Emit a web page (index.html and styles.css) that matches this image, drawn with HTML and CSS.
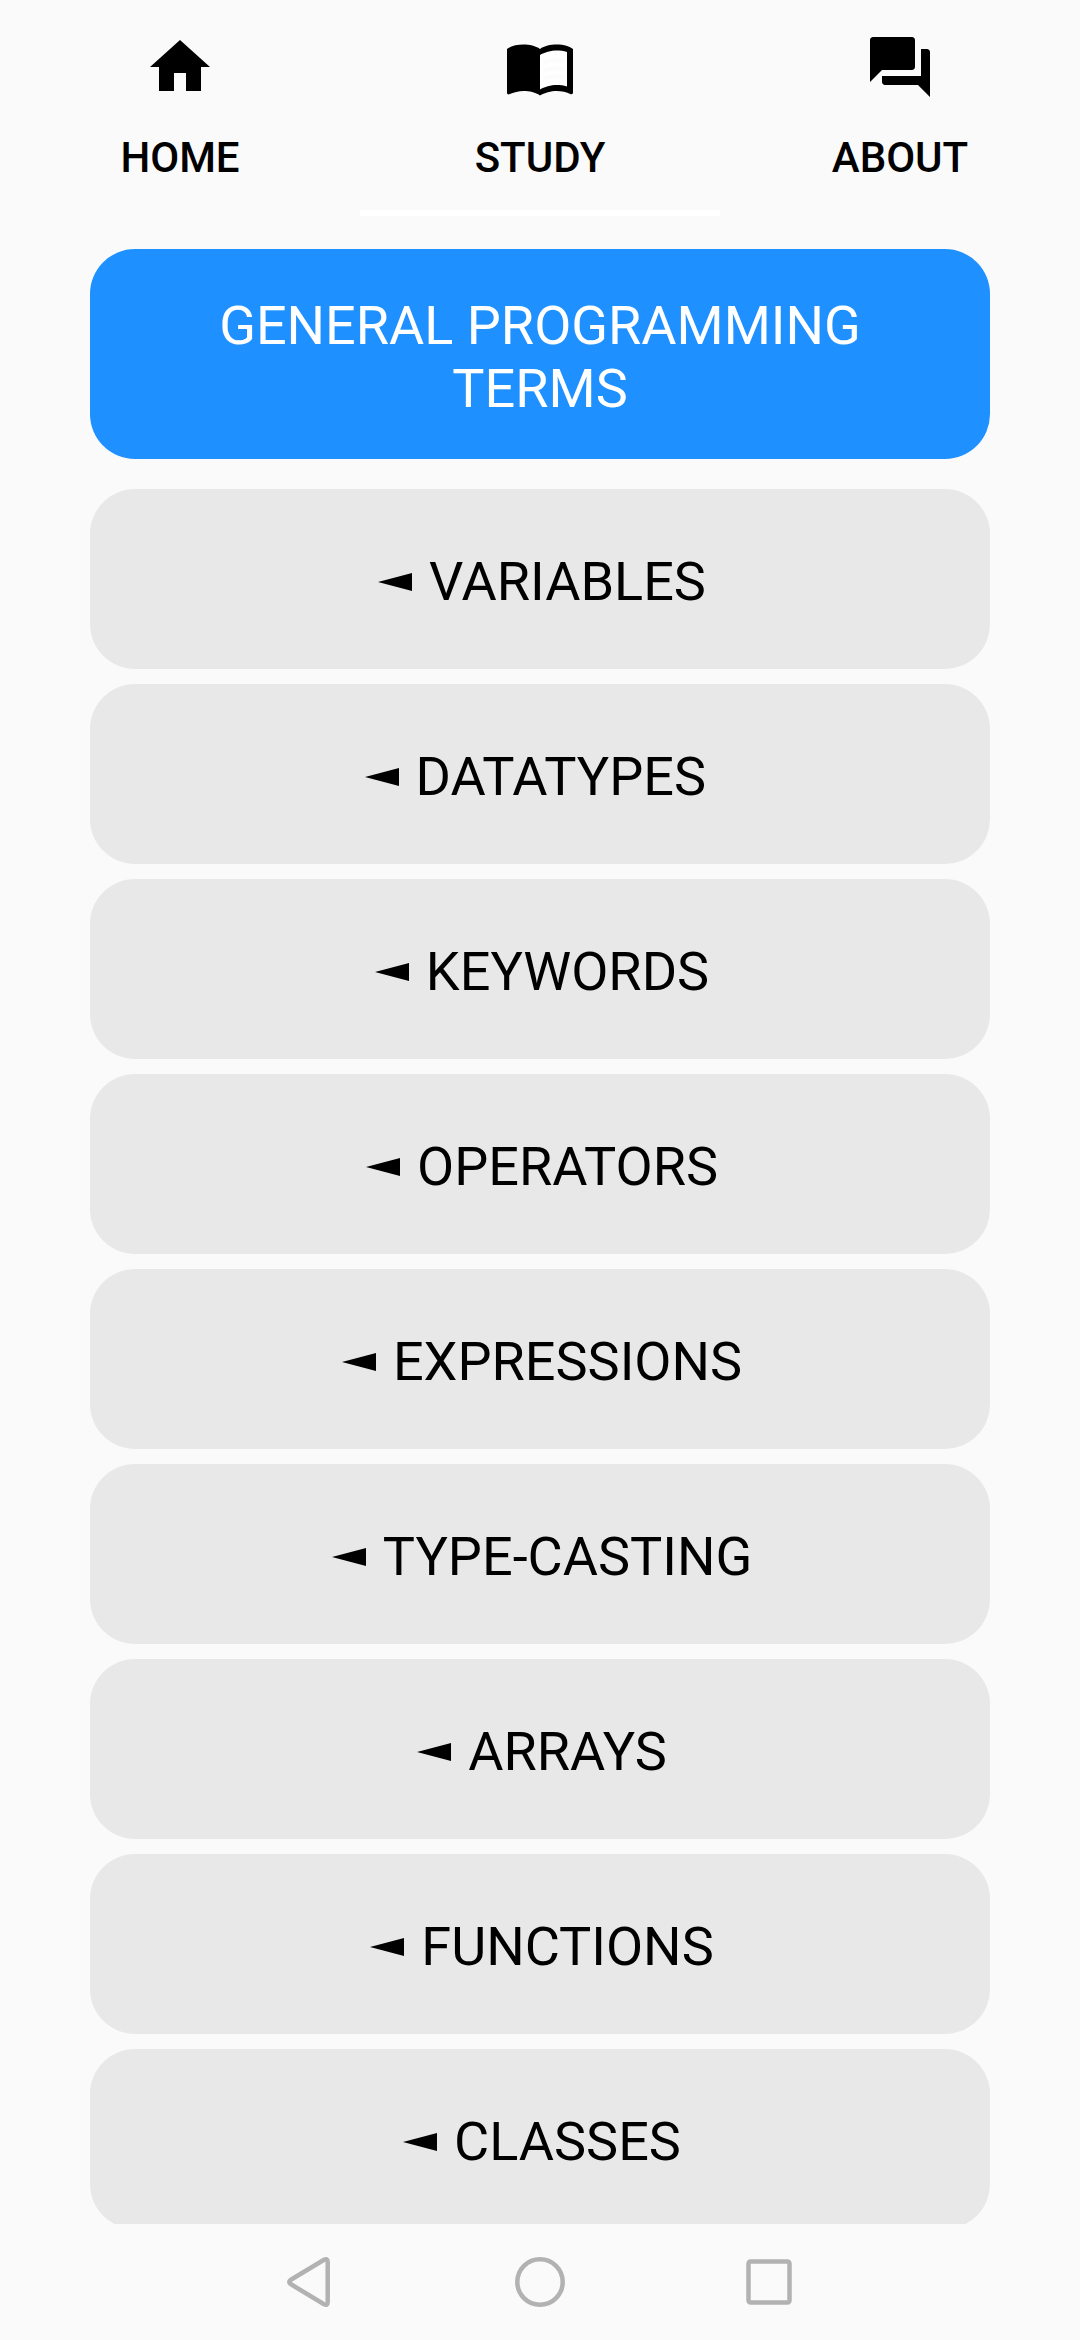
FILE: index.html
```html
<!DOCTYPE html>
<html lang="en">
<head>
<meta charset="utf-8">
<title>Study</title>
<link rel="stylesheet" href="styles.css">
</head>
<body>
<nav class="tabs">
  <a class="tab"><svg class="tab-icon" viewBox="0 0 24 24"><path d="M10 20v-6h4v6h5v-8h3L12 3 2 12h3v8z"/></svg><span class="tab-label">HOME</span></a>
  <a class="tab tab-active"><svg class="tab-icon" viewBox="0 0 24 24"><path class="page" d="M12 8c1.350-.85 3.800-1.500 5.500-1.500 1.200 0 2.400.15 3.500.5v11.500c-1.100-.35-2.300-.5-3.500-.5-1.700 0-4.150.65-5.500 1.500z"/><path class="page-lines" d="M17.500 10.500c.88 0 1.730.09 2.500.26V9.240c-.79-.15-1.640-.24-2.500-.24-1.700 0-3.240.29-4.500.83v1.660c1.130-.64 2.700-.99 4.500-.99zM13 12.490v1.660c1.130-.64 2.700-.99 4.500-.99.88 0 1.730.09 2.500.26V11.900c-.79-.15-1.640-.24-2.500-.24-1.700 0-3.240.3-4.500.83zm4.500 1.840c-1.700 0-3.240.29-4.500.83v1.660c1.130-.64 2.700-.99 4.500-.99.88 0 1.730.09 2.500.26v-1.520c-.79-.16-1.640-.24-2.500-.24z"/><path d="M21 5c-1.110-.35-2.330-.5-3.500-.5-1.950 0-4.050.4-5.500 1.500-1.450-1.100-3.550-1.500-5.500-1.500S2.450 4.900 1 6v14.650c0 .25.25.5.5.5.1 0 .15-.05.25-.05C3.100 20.450 5.050 20 6.500 20c1.950 0 4.050.4 5.500 1.500 1.350-.85 3.800-1.500 5.500-1.500 1.650 0 3.350.3 4.750 1.050.1.05.15.05.25.05.25 0 .5-.25.5-.5V6c-.6-.45-1.250-.75-2-1zm0 13.500c-1.100-.35-2.300-.5-3.500-.5-1.700 0-4.150.65-5.500 1.500V8c1.350-.85 3.800-1.500 5.500-1.500 1.200 0 2.400.15 3.500.5v11.500z"/></svg><span class="tab-label">STUDY</span></a>
  <a class="tab"><svg class="tab-icon" viewBox="0 0 24 24"><path d="M21 6h-2v9H6v2c0 .55.45 1 1 1h11l4 4V7c0-.55-.45-1-1-1zm-4 6V3c0-.55-.45-1-1-1H3c-.55 0-1 .45-1 1v14l4-4h10c.55 0 1-.45 1-1z"/></svg><span class="tab-label">ABOUT</span></a>
</nav>
<main class="content">
  <h1 class="heading">GENERAL PROGRAMMING TERMS</h1>
  <div class="list">
    <div class="item"><svg class="arrow" viewBox="0 0 34 18"><path d="M0 9L34 0v18z"/></svg><span>VARIABLES</span></div>
    <div class="item"><svg class="arrow" viewBox="0 0 34 18"><path d="M0 9L34 0v18z"/></svg><span>DATATYPES </span></div>
    <div class="item"><svg class="arrow" viewBox="0 0 34 18"><path d="M0 9L34 0v18z"/></svg><span>KEYWORDS</span></div>
    <div class="item"><svg class="arrow" viewBox="0 0 34 18"><path d="M0 9L34 0v18z"/></svg><span>OPERATORS</span></div>
    <div class="item"><svg class="arrow" viewBox="0 0 34 18"><path d="M0 9L34 0v18z"/></svg><span>EXPRESSIONS</span></div>
    <div class="item"><svg class="arrow" viewBox="0 0 34 18"><path d="M0 9L34 0v18z"/></svg><span>TYPE-CASTING</span></div>
    <div class="item"><svg class="arrow" viewBox="0 0 34 18"><path d="M0 9L34 0v18z"/></svg><span>ARRAYS</span></div>
    <div class="item"><svg class="arrow" viewBox="0 0 34 18"><path d="M0 9L34 0v18z"/></svg><span>FUNCTIONS</span></div>
    <div class="item"><svg class="arrow" viewBox="0 0 34 18"><path d="M0 9L34 0v18z"/></svg><span>CLASSES</span></div>
  </div>
</main>
<footer class="navbar">
  <svg class="nav-icon" viewBox="0 0 60 60"><path d="M10.500 28L44 7.800Q47.700 6 47.700 10V50Q47.700 54 44 52.200L10.500 32Q8 30 10.500 28z"/></svg>
  <svg class="nav-icon" viewBox="0 0 60 60"><circle cx="30" cy="30" r="22.700"/></svg>
  <svg class="nav-icon" viewBox="0 0 60 60"><rect x="8.500" y="9.500" width="41" height="41" rx="2"/></svg>
</footer>
</body>
</html>
```
FILE: styles.css
```css
* { box-sizing: border-box; }
body {
  margin: 0;
  width: 1080px;
  height: 2340px;
  overflow: hidden;
  display: flex;
  flex-direction: column;
  background: #fafafa;
  color: #000;
  font-family: Roboto, sans-serif;
}
.tabs {
  flex: none;
  display: grid;
  grid-template-columns: repeat(3, 1fr);
  height: 216px;
}
.tab {
  display: flex;
  flex-direction: column;
  align-items: center;
  padding-top: 31px;
  border-bottom: 6px solid transparent;
}
.tab-active { border-bottom-color: #fff; }
.tab-icon { display: block; width: 72px; height: 72px; }
.page { fill: #fff; }
.page-lines { fill: #fcfcfc; }
.tab-label {
  margin-top: 30px;
  font-size: 42px;
  font-weight: 500;
  line-height: 49px;
}
.content {
  flex: 1;
  min-height: 0;
  overflow: hidden;
  padding: 33px 90px 0;
}
.heading {
  margin: 0 0 30px;
  height: 210px;
  padding: 45px 90px 0;
  border-radius: 45px;
  background: #1e90ff;
  color: #fff;
  font-size: 54px;
  font-weight: 400;
  line-height: 63px;
  text-align: center;
}
.list { display: flex; flex-direction: column; gap: 15px; }
.item {
  flex: none;
  display: flex;
  align-items: center;
  justify-content: center;
  gap: 17px;
  height: 180px;
  padding: 5px 0 0 4px;
  border-radius: 45px;
  background: #e8e8e8;
  font-size: 54px;
  line-height: 63px;
  white-space: pre;
}
.arrow { width: 34px; height: 18px; }
.navbar {
  flex: none;
  display: flex;
  justify-content: center;
  gap: 170px;
  height: 116px;
  padding-top: 28px;
}
.nav-icon {
  width: 60px;
  height: 60px;
  fill: none;
  stroke: #b2b2b2;
  stroke-width: 4.500;
}
```
